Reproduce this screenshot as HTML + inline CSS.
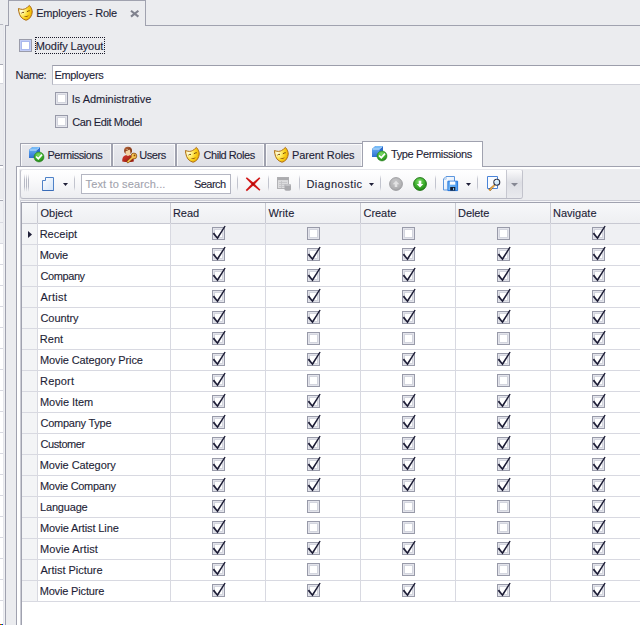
<!DOCTYPE html><html><head><meta charset="utf-8"><title>Employers - Role</title><style>

html,body{margin:0;padding:0;overflow:hidden}
html{width:640px;height:625px}
body{width:640px;height:625px;overflow:hidden;position:relative;background:#ebecef;font-family:"Liberation Sans",sans-serif;font-size:11px;color:#1f1f38;}
div,span{position:absolute;box-sizing:border-box;white-space:nowrap}
svg{position:absolute;overflow:visible}
.t{line-height:13px;height:13px;-webkit-text-stroke:0.12px currentColor}
.cb{width:13px;height:13px;border:1px solid #989aa9;background:#fff;box-shadow:inset 0 0 0 1px #e3e4eb,inset 0 0 0 2px #d3d5de}
.cbh{width:13px;height:13px;border:1px solid #9a9caa;background:#fff;box-shadow:inset 0 0 0 1px #c3cdf5,inset 0 0 0 2px #aab8ee}
.tab{height:23px;top:143px;border:1px solid #a0a2af;border-bottom:none;background:linear-gradient(#e9eaee,#dfe0e6);box-shadow:inset 1px 1px 0 rgba(255,255,255,.75),inset -1px 0 0 rgba(255,255,255,.75)}
.hl{height:1px;background:#d8d9e1}
.vl{width:1px;background:#d8d9e1}

</style></head><body><div style="left:0;top:0;width:640px;height:625px;overflow:hidden">
<svg width="0" height="0" style="left:-10px;top:-10px"><defs>
<radialGradient id="gm" cx="0.22" cy="0.38" r="0.85"><stop offset="0" stop-color="#fffde6"/><stop offset="0.3" stop-color="#ffef7a"/><stop offset="0.6" stop-color="#fbd420"/><stop offset="0.85" stop-color="#f0b808"/><stop offset="1" stop-color="#d69a06"/></radialGradient>
<linearGradient id="gcf" x1="0" y1="0" x2="0" y2="1"><stop offset="0" stop-color="#5ea6ee"/><stop offset="1" stop-color="#2f70d2"/></linearGradient>
<radialGradient id="ggr" cx="0.45" cy="0.3" r="0.75"><stop offset="0" stop-color="#7fdc6a"/><stop offset="0.55" stop-color="#3cae2c"/><stop offset="1" stop-color="#1f7d14"/></radialGradient>
<radialGradient id="ggy" cx="0.45" cy="0.3" r="0.75"><stop offset="0" stop-color="#c6c6c8"/><stop offset="0.7" stop-color="#b2b2b4"/><stop offset="1" stop-color="#9c9c9f"/></radialGradient>
<linearGradient id="gbody" x1="0" y1="0" x2="1" y2="1"><stop offset="0" stop-color="#d43c2e"/><stop offset="1" stop-color="#90140c"/></linearGradient>
<linearGradient id="ghair" x1="0" y1="0" x2="1" y2="1"><stop offset="0" stop-color="#b8683c"/><stop offset="1" stop-color="#6e2a10"/></linearGradient>
<linearGradient id="gpg" x1="0" y1="0" x2="1" y2="1"><stop offset="0" stop-color="#ffffff"/><stop offset="1" stop-color="#d4e4f8"/></linearGradient>
<linearGradient id="gfl" x1="1" y1="0" x2="0" y2="1"><stop offset="0" stop-color="#3f90ec"/><stop offset="1" stop-color="#7cc0f8"/></linearGradient>
<linearGradient id="gsep" x1="0" y1="0" x2="0" y2="1"><stop offset="0" stop-color="#b4b6c2" stop-opacity="0"/><stop offset="0.3" stop-color="#b4b6c2"/><stop offset="0.7" stop-color="#b4b6c2"/><stop offset="1" stop-color="#b4b6c2" stop-opacity="0"/></linearGradient>
</defs></svg>
<div style="left:0px;top:0px;width:5px;height:625px;background:#ebecef;"></div>
<div style="left:0px;top:24px;width:3px;height:1px;background:#b4b6c0;"></div>
<div style="left:0px;top:64px;width:3px;height:20px;background:#fff;border-top:1px solid #a8aab5;border-bottom:1px solid #d4d5dc"></div>
<div style="left:0px;top:165px;width:3px;height:1px;background:#a0a2af;"></div>
<div style="left:0px;top:166px;width:3px;height:2px;background:#fff;"></div>
<div style="left:0px;top:199px;width:3px;height:1px;background:#f8f8fa;"></div>
<div style="left:0px;top:200px;width:3px;height:1px;background:#a8aab5;"></div>
<div style="left:0px;top:201px;width:3px;height:42px;background:#f0f1f4;"></div>
<div style="left:0px;top:243px;width:3px;height:382px;background:#fff;"></div>
<div style="left:0px;top:222px;width:3px;height:1px;background:#d8d9e1;"></div>
<div style="left:0px;top:243px;width:3px;height:1px;background:#d8d9e1;"></div>
<div style="left:0px;top:264px;width:3px;height:1px;background:#d8d9e1;"></div>
<div style="left:0px;top:285px;width:3px;height:1px;background:#d8d9e1;"></div>
<div style="left:0px;top:306px;width:3px;height:1px;background:#d8d9e1;"></div>
<div style="left:0px;top:327px;width:3px;height:1px;background:#d8d9e1;"></div>
<div style="left:0px;top:348px;width:3px;height:1px;background:#d8d9e1;"></div>
<div style="left:0px;top:369px;width:3px;height:1px;background:#d8d9e1;"></div>
<div style="left:0px;top:390px;width:3px;height:1px;background:#d8d9e1;"></div>
<div style="left:0px;top:411px;width:3px;height:1px;background:#d8d9e1;"></div>
<div style="left:0px;top:432px;width:3px;height:1px;background:#d8d9e1;"></div>
<div style="left:0px;top:453px;width:3px;height:1px;background:#d8d9e1;"></div>
<div style="left:0px;top:474px;width:3px;height:1px;background:#d8d9e1;"></div>
<div style="left:0px;top:495px;width:3px;height:1px;background:#d8d9e1;"></div>
<div style="left:0px;top:516px;width:3px;height:1px;background:#d8d9e1;"></div>
<div style="left:0px;top:537px;width:3px;height:1px;background:#d8d9e1;"></div>
<div style="left:0px;top:558px;width:3px;height:1px;background:#d8d9e1;"></div>
<div style="left:0px;top:579px;width:3px;height:1px;background:#d8d9e1;"></div>
<div style="left:0px;top:600px;width:3px;height:1px;background:#d8d9e1;"></div>
<div style="left:3px;top:0px;width:1px;height:625px;background:#e6e7ec;"></div>
<div style="left:4px;top:0px;width:1px;height:625px;background:#eff0f3;"></div>
<div style="left:0px;top:0px;width:5px;height:24px;background:#ebecef;"></div>
<div style="left:0px;top:624px;width:1px;height:1px;background:#f00;"></div>
<div style="left:1px;top:624px;width:1px;height:1px;background:#0c0;"></div>
<div style="left:2px;top:624px;width:1px;height:1px;background:#00f;"></div>
<div style="left:5px;top:25px;width:1px;height:600px;background:#a0a2af;"></div>
<div style="left:5px;top:25px;width:635px;height:1px;background:#a0a2af;"></div>
<div style="left:8px;top:0;width:138px;height:26px;border:1px solid #a0a2af;border-bottom:none;background:#ebecef"></div>
<span class="t" style="left:36.25px;top:7px;letter-spacing:-0.233px;">Employers - Role</span>
<svg style="left:130px;top:10px" width="9" height="8" viewBox="0 0 9 8"><path d="M1 0.7 L8.4 6.6 M8.4 0.7 L1 6.6" stroke="#80828e" stroke-width="2.1" fill="none"/></svg>
<svg style="left:17px;top:4px" width="17" height="17" viewBox="0 0 17 17"><g transform="translate(0.4,0.55) scale(0.95)"><path d="M1.1 4.2 Q2.8 4.9 5.3 5.1 Q7.4 4.9 8.6 4.2 Q11 2.7 12.6 0.9 Q14.4 2.8 15 4.6 Q15.7 6.4 15.6 7.9 Q15.5 10.4 13.9 13.1 Q11.8 16.2 9.06 16.5 Q6 15.6 3.9 13.3 Q2 10.8 1.4 7 Q1.1 5.6 1.1 4.2 Z" fill="url(#gm)" stroke="#ae6c14" stroke-width="1.05" stroke-linejoin="round"/><path d="M4.3 9.0 Q5.5 7.9 6.9 8.3" stroke="#70400c" stroke-width="1.05" fill="none"/><path d="M10 7.6 Q11.4 6.5 13 6.5" stroke="#70400c" stroke-width="1.05" fill="none"/><path d="M6.5 12.1 Q9.4 12.6 12.1 11.2 Q10.2 14.4 6.5 12.1 Z" fill="#8a4e0c"/></g></svg>
<div class="cbh" style="left:19px;top:39px"></div>
<div style="left:35px;top:37px;width:70px;height:17px;border:1px dotted #1a1a2a"></div>
<span class="t" style="left:35.75px;top:40px;letter-spacing:-0.083px;">Modify Layout</span>
<span class="t" style="left:15.50px;top:69px;letter-spacing:-0.312px;">Name:</span>
<div style="left:52px;top:65px;width:600px;height:20px;border:1px solid #b4b6c2;border-top-color:#9c9eab;border-bottom-color:#cfd0d8;background:#fff"></div>
<span class="t" style="left:54.50px;top:69px;letter-spacing:-0.344px;">Employers</span>
<div class="cb" style="left:55px;top:92px"></div>
<span class="t" style="left:71.75px;top:93px;letter-spacing:-0.031px;">Is Administrative</span>
<div class="cb" style="left:55px;top:115px"></div>
<span class="t" style="left:72.25px;top:116px;letter-spacing:-0.404px;">Can Edit Model</span>
<div class="tab" style="left:20px;width:92px"></div>
<svg style="left:28px;top:146px" width="17" height="17" viewBox="0 0 17 17"><path d="M1 4 L4.5 1 L12 1 L12 9 L8.5 12 L1 12 Z" fill="#2c6ccc"/><path d="M1 4 L8.5 4 L8.5 12 L1 12 Z" fill="url(#gcf)"/><path d="M1 4 L4.5 1 L12 1 L8.5 4 Z" fill="#76baf6"/><path d="M1.6 4.1 L8.4 4.1 L11.4 1.5" stroke="#d4ecff" stroke-width="0.8" fill="none"/><circle cx="11" cy="11" r="5" fill="url(#ggr)" stroke="#1f7a16" stroke-width="0.5"/><path d="M8 10.5 L10.3 12.7 L14 8.6" stroke="#fff" stroke-width="1.7" fill="none"/></svg>
<span class="t" style="left:47.40px;top:149px;letter-spacing:-0.465px;">Permissions</span>
<div class="tab" style="left:112px;width:64px"></div>
<svg style="left:121px;top:146px" width="17" height="17" viewBox="0 0 17 17"><path d="M1.2 15.5 Q1 10 4.5 9.3 L6 9 Q7 10.6 8 9 L9.6 9.3 Q13 10 12.8 15.5 Q7 16.6 1.2 15.5 Z" fill="url(#gbody)"/><ellipse cx="7" cy="4.6" rx="4" ry="3.8" fill="url(#ghair)"/><ellipse cx="7" cy="6.4" rx="2.4" ry="3.3" fill="#f3d3a2"/><path d="M3.6 5 Q6.4 4.6 9.2 2.6 Q10.6 4 10.6 6" stroke="#8a3c18" stroke-width="0.9" fill="none"/><path d="M11.4 11.6 L7 15.8" stroke="#8a4a10" stroke-width="2.8" stroke-linecap="round"/><circle cx="12.9" cy="10" r="2.9" fill="#f6c452" stroke="#8a4a10" stroke-width="0.8"/><path d="M11.4 11.6 L7 15.8" stroke="#f6c452" stroke-width="1.5" stroke-linecap="round"/><circle cx="13.5" cy="9.4" r="0.9" fill="#8a4a10"/></svg>
<span class="t" style="left:139.25px;top:149px;letter-spacing:-0.438px;">Users</span>
<div class="tab" style="left:176px;width:89px"></div>
<svg style="left:184px;top:146px" width="17" height="17" viewBox="0 0 17 17"><g transform="translate(0.4,0.55) scale(0.95)"><path d="M1.1 4.2 Q2.8 4.9 5.3 5.1 Q7.4 4.9 8.6 4.2 Q11 2.7 12.6 0.9 Q14.4 2.8 15 4.6 Q15.7 6.4 15.6 7.9 Q15.5 10.4 13.9 13.1 Q11.8 16.2 9.06 16.5 Q6 15.6 3.9 13.3 Q2 10.8 1.4 7 Q1.1 5.6 1.1 4.2 Z" fill="url(#gm)" stroke="#ae6c14" stroke-width="1.05" stroke-linejoin="round"/><path d="M4.3 9.0 Q5.5 7.9 6.9 8.3" stroke="#70400c" stroke-width="1.05" fill="none"/><path d="M10 7.6 Q11.4 6.5 13 6.5" stroke="#70400c" stroke-width="1.05" fill="none"/><path d="M6.5 12.1 Q9.4 12.6 12.1 11.2 Q10.2 14.4 6.5 12.1 Z" fill="#8a4e0c"/></g></svg>
<span class="t" style="left:203.50px;top:149px;letter-spacing:-0.460px;">Child Roles</span>
<div class="tab" style="left:265px;width:98px"></div>
<svg style="left:273.3px;top:146px" width="17" height="17" viewBox="0 0 17 17"><g transform="translate(0.4,0.55) scale(0.95)"><path d="M1.1 4.2 Q2.8 4.9 5.3 5.1 Q7.4 4.9 8.6 4.2 Q11 2.7 12.6 0.9 Q14.4 2.8 15 4.6 Q15.7 6.4 15.6 7.9 Q15.5 10.4 13.9 13.1 Q11.8 16.2 9.06 16.5 Q6 15.6 3.9 13.3 Q2 10.8 1.4 7 Q1.1 5.6 1.1 4.2 Z" fill="url(#gm)" stroke="#ae6c14" stroke-width="1.05" stroke-linejoin="round"/><path d="M4.3 9.0 Q5.5 7.9 6.9 8.3" stroke="#70400c" stroke-width="1.05" fill="none"/><path d="M10 7.6 Q11.4 6.5 13 6.5" stroke="#70400c" stroke-width="1.05" fill="none"/><path d="M6.5 12.1 Q9.4 12.6 12.1 11.2 Q10.2 14.4 6.5 12.1 Z" fill="#8a4e0c"/></g></svg>
<span class="t" style="left:291.90px;top:149px;letter-spacing:-0.082px;">Parent Roles</span>
<div style="left:16px;top:166px;width:640px;height:470px;border:1px solid #a0a2af;background:#fff"></div>
<div style="left:19px;top:169px;width:640px;height:31px;background:#ebecef;"></div>
<div style="left:362px;top:141px;width:121px;height:26px;border:1px solid #a0a2af;border-bottom:none;background:#fff"></div>
<svg style="left:371px;top:145px" width="17" height="17" viewBox="0 0 17 17"><path d="M1 4 L4.5 1 L12 1 L12 9 L8.5 12 L1 12 Z" fill="#2c6ccc"/><path d="M1 4 L8.5 4 L8.5 12 L1 12 Z" fill="url(#gcf)"/><path d="M1 4 L4.5 1 L12 1 L8.5 4 Z" fill="#76baf6"/><path d="M1.6 4.1 L8.4 4.1 L11.4 1.5" stroke="#d4ecff" stroke-width="0.8" fill="none"/><circle cx="11" cy="11" r="5" fill="url(#ggr)" stroke="#1f7a16" stroke-width="0.5"/><path d="M8 10.5 L10.3 12.7 L14 8.6" stroke="#fff" stroke-width="1.7" fill="none"/></svg>
<span class="t" style="left:391.00px;top:148px;letter-spacing:-0.373px;">Type Permissions</span>
<div style="left:20px;top:169px;width:503px;height:30px;border:1px solid #c2c3cc;border-top-color:#e4e5ea;border-bottom-color:#b9bac5;border-radius:3px;background:linear-gradient(#ffffff,#f8f8fa 45%,#ecedf0)"></div>
<div style="left:506px;top:170px;width:16px;height:28px;border-left:1px solid #c6c7d0;border-radius:0 3px 3px 0;background:linear-gradient(#fbfbfc,#dddee4 45%,#e9eaee)"></div>
<div style="left:24px;top:174px;width:1px;height:18px;background:linear-gradient(rgba(170,172,184,0),#b6b8c4 30%,#b6b8c4 70%,rgba(170,172,184,0))"></div>
<div style="left:26px;top:174px;width:1px;height:18px;background:linear-gradient(rgba(170,172,184,0),#b6b8c4 30%,#b6b8c4 70%,rgba(170,172,184,0))"></div>
<div style="left:28px;top:174px;width:1px;height:18px;background:linear-gradient(rgba(170,172,184,0),#b6b8c4 30%,#b6b8c4 70%,rgba(170,172,184,0))"></div>
<svg style="left:42px;top:177px" width="12" height="14" viewBox="0 0 12 14"><path d="M3.5 0.5 L11.5 0.5 L11.5 13.5 L0.5 13.5 L0.5 3.5 L3.5 3.5 Z" fill="url(#gpg)" stroke="#4f82c8" stroke-width="1"/><path d="M0.5 13.5 H11.5" stroke="#3a6cb8" stroke-width="1"/></svg>
<svg style="left:63px;top:183px" width="5" height="3" viewBox="0 0 5 3"><path d="M0 0 L5 0 L2.5 3 Z" fill="#1f1f38"/></svg>
<div style="left:74px;top:175px;width:1px;height:16px;background:linear-gradient(rgba(190,192,204,0),#c2c4ce 25%,#c2c4ce 75%,rgba(190,192,204,0))"></div>
<div style="left:81px;top:174px;width:150px;height:20px;border:1px solid #b4b6c2;background:#fff"></div>
<span class="t" style="left:85.50px;top:178px;letter-spacing:0.141px;color:#a2a4ae;">Text to search...</span>
<span class="t" style="left:194.00px;top:178px;letter-spacing:-0.540px;">Search</span>
<div style="left:237px;top:175px;width:1px;height:16px;background:linear-gradient(rgba(190,192,204,0),#c2c4ce 25%,#c2c4ce 75%,rgba(190,192,204,0))"></div>
<svg style="left:246px;top:177px" width="15" height="14" viewBox="0 0 15 14"><path d="M-0.21 1.25 L6.25 7.92 L13.39 13.85 L14.41 12.75 L7.95 6.08 L0.81 0.15 Z" fill="#d01515"/><path d="M13.28 0.16 L6.19 6.25 L-0.22 13.06 L0.82 14.14 L7.91 8.05 L14.32 1.24 Z" fill="#d01515"/><circle cx="7.05" cy="7.05" r="1.3" fill="#b00a0a"/></svg>
<div style="left:268px;top:175px;width:1px;height:16px;background:linear-gradient(rgba(190,192,204,0),#c2c4ce 25%,#c2c4ce 75%,rgba(190,192,204,0))"></div>
<svg style="left:277px;top:177px" width="15" height="14" viewBox="0 0 15 14"><rect x="0.5" y="0.5" width="11" height="11" fill="#dcdcde" stroke="#b2b2b5"/><rect x="0.5" y="0.5" width="11" height="2.6" fill="#acacaf"/><path d="M2 5.5 H10 M2 7.5 H10 M2 9.5 H10 M4.5 4 V11" stroke="#c2c2c5" stroke-width="0.8"/><path d="M7.5 8 Q7.5 7 10.75 7 Q14 7 14 8 V12.5 Q14 13.8 10.75 13.8 Q7.5 13.8 7.5 12.5 Z" fill="#a9a9ad"/><ellipse cx="10.75" cy="8" rx="3" ry="0.9" fill="#c4c4c8"/></svg>
<div style="left:299px;top:175px;width:1px;height:16px;background:linear-gradient(rgba(190,192,204,0),#c2c4ce 25%,#c2c4ce 75%,rgba(190,192,204,0))"></div>
<span class="t" style="left:306.40px;top:178px;letter-spacing:0.483px;">Diagnostic</span>
<svg style="left:369px;top:183px" width="5" height="3" viewBox="0 0 5 3"><path d="M0 0 L5 0 L2.5 3 Z" fill="#1f1f38"/></svg>
<div style="left:380px;top:175px;width:1px;height:16px;background:linear-gradient(rgba(190,192,204,0),#c2c4ce 25%,#c2c4ce 75%,rgba(190,192,204,0))"></div>
<svg style="left:389px;top:177px" width="14" height="14" viewBox="0 0 14 14"><circle cx="7" cy="7" r="6.4" fill="url(#ggy)" stroke="#9b9b9e" stroke-width="0.9"/><path d="M7 3.8 L10.3 7.3 H8.3 V10 H5.7 V7.3 H3.7 Z" fill="#e2e2e3"/></svg>
<svg style="left:413px;top:177px" width="14" height="14" viewBox="0 0 14 14"><circle cx="7" cy="7" r="6.4" fill="url(#ggr)" stroke="#1b6f12" stroke-width="0.9"/><path d="M7 10.4 L10.3 7 H8.3 V3.8 H5.7 V7 H3.7 Z" fill="#fff"/></svg>
<div style="left:435px;top:175px;width:1px;height:16px;background:linear-gradient(rgba(190,192,204,0),#c2c4ce 25%,#c2c4ce 75%,rgba(190,192,204,0))"></div>
<svg style="left:443px;top:176px" width="16" height="16" viewBox="0 0 16 16"><path d="M3 0.5 H11.5 V14 H0.5 V3 Z" fill="url(#gpg)" stroke="#5c96de"/><path d="M0.8 3.2 H3.2 V0.8" fill="none" stroke="#8ab6ea" stroke-width="0.7"/><path d="M4.9 5.2 H14.6 V14.6 H4.9 Z" fill="url(#gfl)" stroke="#2878dc" stroke-width="1"/><rect x="6.9" y="5.5" width="5.4" height="3.2" fill="#fdfeff"/><rect x="7.2" y="11" width="5.1" height="3.6" fill="#141c2c"/><rect x="10" y="11.9" width="1.1" height="2.2" fill="#7cc0f4"/></svg>
<svg style="left:466px;top:183px" width="5" height="3" viewBox="0 0 5 3"><path d="M0 0 L5 0 L2.5 3 Z" fill="#1f1f38"/></svg>
<div style="left:477px;top:175px;width:1px;height:16px;background:linear-gradient(rgba(190,192,204,0),#c2c4ce 25%,#c2c4ce 75%,rgba(190,192,204,0))"></div>
<svg style="left:487px;top:176px" width="16" height="16" viewBox="0 0 16 16"><path d="M0.5 0.5 H10.5 V12.5 H0.5 Z" fill="#fafcff" stroke="#4a84d8"/><path d="M7 8.5 L8.1 9.5 L3.3 15.1 L1.3 13.5 Z" fill="#7e4e14"/><path d="M7.3 9.3 L2.6 14.1" stroke="#f6b44c" stroke-width="1.25" stroke-linecap="round"/><circle cx="9.8" cy="6.3" r="3.0" fill="#d4ecfc" stroke="#2e3246" stroke-width="1.05"/><path d="M7.9 5.8 Q8.5 4.2 10.2 4.1" stroke="#fff" stroke-width="0.9" fill="none"/></svg>
<svg style="left:511px;top:183px" width="7" height="4" viewBox="0 0 7 4"><path d="M0 0 L7 0 L3.5 3.6 Z" fill="#858793"/></svg>
<div style="left:20px;top:200px;width:640px;height:430px;background:#fff;border:1px solid #cbccd5"></div>
<div style="left:21px;top:201px;width:640px;height:430px;background:#f6f6f9;"></div>
<div style="left:21px;top:202px;width:640px;height:430px;background:#fff;border:1px solid #a0a2af"></div>
<div style="left:22px;top:203px;width:640px;height:20px;background:linear-gradient(#f7f8fa,#eeeff2);"></div>
<div style="left:22px;top:224px;width:15px;height:377px;background:#f3f4f6;"></div>
<div style="left:171px;top:224px;width:480px;height:20px;background:#eff0f3;"></div>
<div class="hl" style="left:22px;top:223px;width:640px;background:#c8c9d2"></div>
<div class="hl" style="left:22px;top:244px;width:640px"></div>
<div class="hl" style="left:22px;top:265px;width:640px"></div>
<div class="hl" style="left:22px;top:286px;width:640px"></div>
<div class="hl" style="left:22px;top:307px;width:640px"></div>
<div class="hl" style="left:22px;top:328px;width:640px"></div>
<div class="hl" style="left:22px;top:349px;width:640px"></div>
<div class="hl" style="left:22px;top:370px;width:640px"></div>
<div class="hl" style="left:22px;top:391px;width:640px"></div>
<div class="hl" style="left:22px;top:412px;width:640px"></div>
<div class="hl" style="left:22px;top:433px;width:640px"></div>
<div class="hl" style="left:22px;top:454px;width:640px"></div>
<div class="hl" style="left:22px;top:475px;width:640px"></div>
<div class="hl" style="left:22px;top:496px;width:640px"></div>
<div class="hl" style="left:22px;top:517px;width:640px"></div>
<div class="hl" style="left:22px;top:538px;width:640px"></div>
<div class="hl" style="left:22px;top:559px;width:640px"></div>
<div class="hl" style="left:22px;top:580px;width:640px"></div>
<div class="hl" style="left:22px;top:601px;width:640px"></div>
<div class="vl" style="left:37px;top:203px;height:399px"></div>
<div class="vl" style="left:170px;top:203px;height:399px"></div>
<div class="vl" style="left:265px;top:203px;height:399px"></div>
<div class="vl" style="left:360px;top:203px;height:399px"></div>
<div class="vl" style="left:455px;top:203px;height:399px"></div>
<div class="vl" style="left:550px;top:203px;height:399px"></div>
<div style="left:37px;top:203px;width:1px;height:20px;background:#c8c9d2;"></div>
<div style="left:170px;top:203px;width:1px;height:20px;background:#c8c9d2;"></div>
<div style="left:265px;top:203px;width:1px;height:20px;background:#c8c9d2;"></div>
<div style="left:360px;top:203px;width:1px;height:20px;background:#c8c9d2;"></div>
<div style="left:455px;top:203px;width:1px;height:20px;background:#c8c9d2;"></div>
<div style="left:550px;top:203px;width:1px;height:20px;background:#c8c9d2;"></div>
<span class="t" style="left:40.50px;top:207px;letter-spacing:0.000px;">Object</span>
<span class="t" style="left:173.00px;top:207px;letter-spacing:-0.083px;">Read</span>
<span class="t" style="left:268.60px;top:207px;letter-spacing:0.075px;">Write</span>
<span class="t" style="left:363.60px;top:207px;letter-spacing:-0.070px;">Create</span>
<span class="t" style="left:458.10px;top:207px;letter-spacing:-0.120px;">Delete</span>
<span class="t" style="left:553.00px;top:207px;letter-spacing:0.014px;">Navigate</span>
<svg style="left:28px;top:231px" width="4" height="7" viewBox="0 0 4 7"><path d="M0 0 L4 3.5 L0 7 Z" fill="#1f1f38"/></svg>
<span class="t" style="left:39.65px;top:228px;letter-spacing:0.025px;">Receipt</span>
<div class="cb" style="left:212px;top:227px"></div><svg style="left:212px;top:225px" width="14" height="14" viewBox="0 -2 14 14"><path d="M0.7 6.7 L2.1 5.6 L5.3 9.7 L12.5 -1.3 L13.7 -0.7 L5.6 12.5 Z" fill="#1d1d36"/></svg>
<div class="cb" style="left:307px;top:227px"></div>
<div class="cb" style="left:402px;top:227px"></div>
<div class="cb" style="left:497px;top:227px"></div>
<div class="cb" style="left:592px;top:227px"></div><svg style="left:592px;top:225px" width="14" height="14" viewBox="0 -2 14 14"><path d="M0.7 6.7 L2.1 5.6 L5.3 9.7 L12.5 -1.3 L13.7 -0.7 L5.6 12.5 Z" fill="#1d1d36"/></svg>
<span class="t" style="left:39.65px;top:249px;letter-spacing:-0.212px;">Movie</span>
<div class="cb" style="left:212px;top:248px"></div><svg style="left:212px;top:246px" width="14" height="14" viewBox="0 -2 14 14"><path d="M0.7 6.7 L2.1 5.6 L5.3 9.7 L12.5 -1.3 L13.7 -0.7 L5.6 12.5 Z" fill="#1d1d36"/></svg>
<div class="cb" style="left:307px;top:248px"></div><svg style="left:307px;top:246px" width="14" height="14" viewBox="0 -2 14 14"><path d="M0.7 6.7 L2.1 5.6 L5.3 9.7 L12.5 -1.3 L13.7 -0.7 L5.6 12.5 Z" fill="#1d1d36"/></svg>
<div class="cb" style="left:402px;top:248px"></div><svg style="left:402px;top:246px" width="14" height="14" viewBox="0 -2 14 14"><path d="M0.7 6.7 L2.1 5.6 L5.3 9.7 L12.5 -1.3 L13.7 -0.7 L5.6 12.5 Z" fill="#1d1d36"/></svg>
<div class="cb" style="left:497px;top:248px"></div><svg style="left:497px;top:246px" width="14" height="14" viewBox="0 -2 14 14"><path d="M0.7 6.7 L2.1 5.6 L5.3 9.7 L12.5 -1.3 L13.7 -0.7 L5.6 12.5 Z" fill="#1d1d36"/></svg>
<div class="cb" style="left:592px;top:248px"></div><svg style="left:592px;top:246px" width="14" height="14" viewBox="0 -2 14 14"><path d="M0.7 6.7 L2.1 5.6 L5.3 9.7 L12.5 -1.3 L13.7 -0.7 L5.6 12.5 Z" fill="#1d1d36"/></svg>
<span class="t" style="left:40.50px;top:270px;letter-spacing:-0.417px;">Company</span>
<div class="cb" style="left:212px;top:269px"></div><svg style="left:212px;top:267px" width="14" height="14" viewBox="0 -2 14 14"><path d="M0.7 6.7 L2.1 5.6 L5.3 9.7 L12.5 -1.3 L13.7 -0.7 L5.6 12.5 Z" fill="#1d1d36"/></svg>
<div class="cb" style="left:307px;top:269px"></div><svg style="left:307px;top:267px" width="14" height="14" viewBox="0 -2 14 14"><path d="M0.7 6.7 L2.1 5.6 L5.3 9.7 L12.5 -1.3 L13.7 -0.7 L5.6 12.5 Z" fill="#1d1d36"/></svg>
<div class="cb" style="left:402px;top:269px"></div><svg style="left:402px;top:267px" width="14" height="14" viewBox="0 -2 14 14"><path d="M0.7 6.7 L2.1 5.6 L5.3 9.7 L12.5 -1.3 L13.7 -0.7 L5.6 12.5 Z" fill="#1d1d36"/></svg>
<div class="cb" style="left:497px;top:269px"></div><svg style="left:497px;top:267px" width="14" height="14" viewBox="0 -2 14 14"><path d="M0.7 6.7 L2.1 5.6 L5.3 9.7 L12.5 -1.3 L13.7 -0.7 L5.6 12.5 Z" fill="#1d1d36"/></svg>
<div class="cb" style="left:592px;top:269px"></div><svg style="left:592px;top:267px" width="14" height="14" viewBox="0 -2 14 14"><path d="M0.7 6.7 L2.1 5.6 L5.3 9.7 L12.5 -1.3 L13.7 -0.7 L5.6 12.5 Z" fill="#1d1d36"/></svg>
<span class="t" style="left:40.50px;top:291px;letter-spacing:0.250px;">Artist</span>
<div class="cb" style="left:212px;top:290px"></div><svg style="left:212px;top:288px" width="14" height="14" viewBox="0 -2 14 14"><path d="M0.7 6.7 L2.1 5.6 L5.3 9.7 L12.5 -1.3 L13.7 -0.7 L5.6 12.5 Z" fill="#1d1d36"/></svg>
<div class="cb" style="left:307px;top:290px"></div><svg style="left:307px;top:288px" width="14" height="14" viewBox="0 -2 14 14"><path d="M0.7 6.7 L2.1 5.6 L5.3 9.7 L12.5 -1.3 L13.7 -0.7 L5.6 12.5 Z" fill="#1d1d36"/></svg>
<div class="cb" style="left:402px;top:290px"></div><svg style="left:402px;top:288px" width="14" height="14" viewBox="0 -2 14 14"><path d="M0.7 6.7 L2.1 5.6 L5.3 9.7 L12.5 -1.3 L13.7 -0.7 L5.6 12.5 Z" fill="#1d1d36"/></svg>
<div class="cb" style="left:497px;top:290px"></div><svg style="left:497px;top:288px" width="14" height="14" viewBox="0 -2 14 14"><path d="M0.7 6.7 L2.1 5.6 L5.3 9.7 L12.5 -1.3 L13.7 -0.7 L5.6 12.5 Z" fill="#1d1d36"/></svg>
<div class="cb" style="left:592px;top:290px"></div><svg style="left:592px;top:288px" width="14" height="14" viewBox="0 -2 14 14"><path d="M0.7 6.7 L2.1 5.6 L5.3 9.7 L12.5 -1.3 L13.7 -0.7 L5.6 12.5 Z" fill="#1d1d36"/></svg>
<span class="t" style="left:40.50px;top:312px;letter-spacing:-0.083px;">Country</span>
<div class="cb" style="left:212px;top:311px"></div><svg style="left:212px;top:309px" width="14" height="14" viewBox="0 -2 14 14"><path d="M0.7 6.7 L2.1 5.6 L5.3 9.7 L12.5 -1.3 L13.7 -0.7 L5.6 12.5 Z" fill="#1d1d36"/></svg>
<div class="cb" style="left:307px;top:311px"></div><svg style="left:307px;top:309px" width="14" height="14" viewBox="0 -2 14 14"><path d="M0.7 6.7 L2.1 5.6 L5.3 9.7 L12.5 -1.3 L13.7 -0.7 L5.6 12.5 Z" fill="#1d1d36"/></svg>
<div class="cb" style="left:402px;top:311px"></div><svg style="left:402px;top:309px" width="14" height="14" viewBox="0 -2 14 14"><path d="M0.7 6.7 L2.1 5.6 L5.3 9.7 L12.5 -1.3 L13.7 -0.7 L5.6 12.5 Z" fill="#1d1d36"/></svg>
<div class="cb" style="left:497px;top:311px"></div><svg style="left:497px;top:309px" width="14" height="14" viewBox="0 -2 14 14"><path d="M0.7 6.7 L2.1 5.6 L5.3 9.7 L12.5 -1.3 L13.7 -0.7 L5.6 12.5 Z" fill="#1d1d36"/></svg>
<div class="cb" style="left:592px;top:311px"></div><svg style="left:592px;top:309px" width="14" height="14" viewBox="0 -2 14 14"><path d="M0.7 6.7 L2.1 5.6 L5.3 9.7 L12.5 -1.3 L13.7 -0.7 L5.6 12.5 Z" fill="#1d1d36"/></svg>
<span class="t" style="left:39.65px;top:333px;letter-spacing:0.100px;">Rent</span>
<div class="cb" style="left:212px;top:332px"></div><svg style="left:212px;top:330px" width="14" height="14" viewBox="0 -2 14 14"><path d="M0.7 6.7 L2.1 5.6 L5.3 9.7 L12.5 -1.3 L13.7 -0.7 L5.6 12.5 Z" fill="#1d1d36"/></svg>
<div class="cb" style="left:307px;top:332px"></div>
<div class="cb" style="left:402px;top:332px"></div>
<div class="cb" style="left:497px;top:332px"></div>
<div class="cb" style="left:592px;top:332px"></div><svg style="left:592px;top:330px" width="14" height="14" viewBox="0 -2 14 14"><path d="M0.7 6.7 L2.1 5.6 L5.3 9.7 L12.5 -1.3 L13.7 -0.7 L5.6 12.5 Z" fill="#1d1d36"/></svg>
<span class="t" style="left:40.00px;top:354px;letter-spacing:-0.118px;">Movie Category Price</span>
<div class="cb" style="left:212px;top:353px"></div><svg style="left:212px;top:351px" width="14" height="14" viewBox="0 -2 14 14"><path d="M0.7 6.7 L2.1 5.6 L5.3 9.7 L12.5 -1.3 L13.7 -0.7 L5.6 12.5 Z" fill="#1d1d36"/></svg>
<div class="cb" style="left:307px;top:353px"></div><svg style="left:307px;top:351px" width="14" height="14" viewBox="0 -2 14 14"><path d="M0.7 6.7 L2.1 5.6 L5.3 9.7 L12.5 -1.3 L13.7 -0.7 L5.6 12.5 Z" fill="#1d1d36"/></svg>
<div class="cb" style="left:402px;top:353px"></div><svg style="left:402px;top:351px" width="14" height="14" viewBox="0 -2 14 14"><path d="M0.7 6.7 L2.1 5.6 L5.3 9.7 L12.5 -1.3 L13.7 -0.7 L5.6 12.5 Z" fill="#1d1d36"/></svg>
<div class="cb" style="left:497px;top:353px"></div><svg style="left:497px;top:351px" width="14" height="14" viewBox="0 -2 14 14"><path d="M0.7 6.7 L2.1 5.6 L5.3 9.7 L12.5 -1.3 L13.7 -0.7 L5.6 12.5 Z" fill="#1d1d36"/></svg>
<div class="cb" style="left:592px;top:353px"></div><svg style="left:592px;top:351px" width="14" height="14" viewBox="0 -2 14 14"><path d="M0.7 6.7 L2.1 5.6 L5.3 9.7 L12.5 -1.3 L13.7 -0.7 L5.6 12.5 Z" fill="#1d1d36"/></svg>
<span class="t" style="left:40.00px;top:375px;letter-spacing:0.200px;">Report</span>
<div class="cb" style="left:212px;top:374px"></div><svg style="left:212px;top:372px" width="14" height="14" viewBox="0 -2 14 14"><path d="M0.7 6.7 L2.1 5.6 L5.3 9.7 L12.5 -1.3 L13.7 -0.7 L5.6 12.5 Z" fill="#1d1d36"/></svg>
<div class="cb" style="left:307px;top:374px"></div>
<div class="cb" style="left:402px;top:374px"></div>
<div class="cb" style="left:497px;top:374px"></div>
<div class="cb" style="left:592px;top:374px"></div><svg style="left:592px;top:372px" width="14" height="14" viewBox="0 -2 14 14"><path d="M0.7 6.7 L2.1 5.6 L5.3 9.7 L12.5 -1.3 L13.7 -0.7 L5.6 12.5 Z" fill="#1d1d36"/></svg>
<span class="t" style="left:40.00px;top:396px;letter-spacing:-0.056px;">Movie Item</span>
<div class="cb" style="left:212px;top:395px"></div><svg style="left:212px;top:393px" width="14" height="14" viewBox="0 -2 14 14"><path d="M0.7 6.7 L2.1 5.6 L5.3 9.7 L12.5 -1.3 L13.7 -0.7 L5.6 12.5 Z" fill="#1d1d36"/></svg>
<div class="cb" style="left:307px;top:395px"></div><svg style="left:307px;top:393px" width="14" height="14" viewBox="0 -2 14 14"><path d="M0.7 6.7 L2.1 5.6 L5.3 9.7 L12.5 -1.3 L13.7 -0.7 L5.6 12.5 Z" fill="#1d1d36"/></svg>
<div class="cb" style="left:402px;top:395px"></div><svg style="left:402px;top:393px" width="14" height="14" viewBox="0 -2 14 14"><path d="M0.7 6.7 L2.1 5.6 L5.3 9.7 L12.5 -1.3 L13.7 -0.7 L5.6 12.5 Z" fill="#1d1d36"/></svg>
<div class="cb" style="left:497px;top:395px"></div><svg style="left:497px;top:393px" width="14" height="14" viewBox="0 -2 14 14"><path d="M0.7 6.7 L2.1 5.6 L5.3 9.7 L12.5 -1.3 L13.7 -0.7 L5.6 12.5 Z" fill="#1d1d36"/></svg>
<div class="cb" style="left:592px;top:395px"></div><svg style="left:592px;top:393px" width="14" height="14" viewBox="0 -2 14 14"><path d="M0.7 6.7 L2.1 5.6 L5.3 9.7 L12.5 -1.3 L13.7 -0.7 L5.6 12.5 Z" fill="#1d1d36"/></svg>
<span class="t" style="left:40.50px;top:417px;letter-spacing:-0.250px;">Company Type</span>
<div class="cb" style="left:212px;top:416px"></div><svg style="left:212px;top:414px" width="14" height="14" viewBox="0 -2 14 14"><path d="M0.7 6.7 L2.1 5.6 L5.3 9.7 L12.5 -1.3 L13.7 -0.7 L5.6 12.5 Z" fill="#1d1d36"/></svg>
<div class="cb" style="left:307px;top:416px"></div><svg style="left:307px;top:414px" width="14" height="14" viewBox="0 -2 14 14"><path d="M0.7 6.7 L2.1 5.6 L5.3 9.7 L12.5 -1.3 L13.7 -0.7 L5.6 12.5 Z" fill="#1d1d36"/></svg>
<div class="cb" style="left:402px;top:416px"></div><svg style="left:402px;top:414px" width="14" height="14" viewBox="0 -2 14 14"><path d="M0.7 6.7 L2.1 5.6 L5.3 9.7 L12.5 -1.3 L13.7 -0.7 L5.6 12.5 Z" fill="#1d1d36"/></svg>
<div class="cb" style="left:497px;top:416px"></div><svg style="left:497px;top:414px" width="14" height="14" viewBox="0 -2 14 14"><path d="M0.7 6.7 L2.1 5.6 L5.3 9.7 L12.5 -1.3 L13.7 -0.7 L5.6 12.5 Z" fill="#1d1d36"/></svg>
<div class="cb" style="left:592px;top:416px"></div><svg style="left:592px;top:414px" width="14" height="14" viewBox="0 -2 14 14"><path d="M0.7 6.7 L2.1 5.6 L5.3 9.7 L12.5 -1.3 L13.7 -0.7 L5.6 12.5 Z" fill="#1d1d36"/></svg>
<span class="t" style="left:40.50px;top:438px;letter-spacing:-0.429px;">Customer</span>
<div class="cb" style="left:212px;top:437px"></div><svg style="left:212px;top:435px" width="14" height="14" viewBox="0 -2 14 14"><path d="M0.7 6.7 L2.1 5.6 L5.3 9.7 L12.5 -1.3 L13.7 -0.7 L5.6 12.5 Z" fill="#1d1d36"/></svg>
<div class="cb" style="left:307px;top:437px"></div><svg style="left:307px;top:435px" width="14" height="14" viewBox="0 -2 14 14"><path d="M0.7 6.7 L2.1 5.6 L5.3 9.7 L12.5 -1.3 L13.7 -0.7 L5.6 12.5 Z" fill="#1d1d36"/></svg>
<div class="cb" style="left:402px;top:437px"></div><svg style="left:402px;top:435px" width="14" height="14" viewBox="0 -2 14 14"><path d="M0.7 6.7 L2.1 5.6 L5.3 9.7 L12.5 -1.3 L13.7 -0.7 L5.6 12.5 Z" fill="#1d1d36"/></svg>
<div class="cb" style="left:497px;top:437px"></div><svg style="left:497px;top:435px" width="14" height="14" viewBox="0 -2 14 14"><path d="M0.7 6.7 L2.1 5.6 L5.3 9.7 L12.5 -1.3 L13.7 -0.7 L5.6 12.5 Z" fill="#1d1d36"/></svg>
<div class="cb" style="left:592px;top:437px"></div><svg style="left:592px;top:435px" width="14" height="14" viewBox="0 -2 14 14"><path d="M0.7 6.7 L2.1 5.6 L5.3 9.7 L12.5 -1.3 L13.7 -0.7 L5.6 12.5 Z" fill="#1d1d36"/></svg>
<span class="t" style="left:39.65px;top:459px;letter-spacing:-0.065px;">Movie Category</span>
<div class="cb" style="left:212px;top:458px"></div><svg style="left:212px;top:456px" width="14" height="14" viewBox="0 -2 14 14"><path d="M0.7 6.7 L2.1 5.6 L5.3 9.7 L12.5 -1.3 L13.7 -0.7 L5.6 12.5 Z" fill="#1d1d36"/></svg>
<div class="cb" style="left:307px;top:458px"></div><svg style="left:307px;top:456px" width="14" height="14" viewBox="0 -2 14 14"><path d="M0.7 6.7 L2.1 5.6 L5.3 9.7 L12.5 -1.3 L13.7 -0.7 L5.6 12.5 Z" fill="#1d1d36"/></svg>
<div class="cb" style="left:402px;top:458px"></div><svg style="left:402px;top:456px" width="14" height="14" viewBox="0 -2 14 14"><path d="M0.7 6.7 L2.1 5.6 L5.3 9.7 L12.5 -1.3 L13.7 -0.7 L5.6 12.5 Z" fill="#1d1d36"/></svg>
<div class="cb" style="left:497px;top:458px"></div><svg style="left:497px;top:456px" width="14" height="14" viewBox="0 -2 14 14"><path d="M0.7 6.7 L2.1 5.6 L5.3 9.7 L12.5 -1.3 L13.7 -0.7 L5.6 12.5 Z" fill="#1d1d36"/></svg>
<div class="cb" style="left:592px;top:458px"></div><svg style="left:592px;top:456px" width="14" height="14" viewBox="0 -2 14 14"><path d="M0.7 6.7 L2.1 5.6 L5.3 9.7 L12.5 -1.3 L13.7 -0.7 L5.6 12.5 Z" fill="#1d1d36"/></svg>
<span class="t" style="left:40.00px;top:480px;letter-spacing:-0.292px;">Movie Company</span>
<div class="cb" style="left:212px;top:479px"></div><svg style="left:212px;top:477px" width="14" height="14" viewBox="0 -2 14 14"><path d="M0.7 6.7 L2.1 5.6 L5.3 9.7 L12.5 -1.3 L13.7 -0.7 L5.6 12.5 Z" fill="#1d1d36"/></svg>
<div class="cb" style="left:307px;top:479px"></div><svg style="left:307px;top:477px" width="14" height="14" viewBox="0 -2 14 14"><path d="M0.7 6.7 L2.1 5.6 L5.3 9.7 L12.5 -1.3 L13.7 -0.7 L5.6 12.5 Z" fill="#1d1d36"/></svg>
<div class="cb" style="left:402px;top:479px"></div><svg style="left:402px;top:477px" width="14" height="14" viewBox="0 -2 14 14"><path d="M0.7 6.7 L2.1 5.6 L5.3 9.7 L12.5 -1.3 L13.7 -0.7 L5.6 12.5 Z" fill="#1d1d36"/></svg>
<div class="cb" style="left:497px;top:479px"></div><svg style="left:497px;top:477px" width="14" height="14" viewBox="0 -2 14 14"><path d="M0.7 6.7 L2.1 5.6 L5.3 9.7 L12.5 -1.3 L13.7 -0.7 L5.6 12.5 Z" fill="#1d1d36"/></svg>
<div class="cb" style="left:592px;top:479px"></div><svg style="left:592px;top:477px" width="14" height="14" viewBox="0 -2 14 14"><path d="M0.7 6.7 L2.1 5.6 L5.3 9.7 L12.5 -1.3 L13.7 -0.7 L5.6 12.5 Z" fill="#1d1d36"/></svg>
<span class="t" style="left:40.00px;top:501px;letter-spacing:-0.179px;">Language</span>
<div class="cb" style="left:212px;top:500px"></div><svg style="left:212px;top:498px" width="14" height="14" viewBox="0 -2 14 14"><path d="M0.7 6.7 L2.1 5.6 L5.3 9.7 L12.5 -1.3 L13.7 -0.7 L5.6 12.5 Z" fill="#1d1d36"/></svg>
<div class="cb" style="left:307px;top:500px"></div>
<div class="cb" style="left:402px;top:500px"></div>
<div class="cb" style="left:497px;top:500px"></div>
<div class="cb" style="left:592px;top:500px"></div><svg style="left:592px;top:498px" width="14" height="14" viewBox="0 -2 14 14"><path d="M0.7 6.7 L2.1 5.6 L5.3 9.7 L12.5 -1.3 L13.7 -0.7 L5.6 12.5 Z" fill="#1d1d36"/></svg>
<span class="t" style="left:40.00px;top:522px;letter-spacing:-0.119px;">Movie Artist Line</span>
<div class="cb" style="left:212px;top:521px"></div><svg style="left:212px;top:519px" width="14" height="14" viewBox="0 -2 14 14"><path d="M0.7 6.7 L2.1 5.6 L5.3 9.7 L12.5 -1.3 L13.7 -0.7 L5.6 12.5 Z" fill="#1d1d36"/></svg>
<div class="cb" style="left:307px;top:521px"></div>
<div class="cb" style="left:402px;top:521px"></div>
<div class="cb" style="left:497px;top:521px"></div>
<div class="cb" style="left:592px;top:521px"></div><svg style="left:592px;top:519px" width="14" height="14" viewBox="0 -2 14 14"><path d="M0.7 6.7 L2.1 5.6 L5.3 9.7 L12.5 -1.3 L13.7 -0.7 L5.6 12.5 Z" fill="#1d1d36"/></svg>
<span class="t" style="left:40.00px;top:543px;letter-spacing:0.091px;">Movie Artist</span>
<div class="cb" style="left:212px;top:542px"></div><svg style="left:212px;top:540px" width="14" height="14" viewBox="0 -2 14 14"><path d="M0.7 6.7 L2.1 5.6 L5.3 9.7 L12.5 -1.3 L13.7 -0.7 L5.6 12.5 Z" fill="#1d1d36"/></svg>
<div class="cb" style="left:307px;top:542px"></div><svg style="left:307px;top:540px" width="14" height="14" viewBox="0 -2 14 14"><path d="M0.7 6.7 L2.1 5.6 L5.3 9.7 L12.5 -1.3 L13.7 -0.7 L5.6 12.5 Z" fill="#1d1d36"/></svg>
<div class="cb" style="left:402px;top:542px"></div><svg style="left:402px;top:540px" width="14" height="14" viewBox="0 -2 14 14"><path d="M0.7 6.7 L2.1 5.6 L5.3 9.7 L12.5 -1.3 L13.7 -0.7 L5.6 12.5 Z" fill="#1d1d36"/></svg>
<div class="cb" style="left:497px;top:542px"></div><svg style="left:497px;top:540px" width="14" height="14" viewBox="0 -2 14 14"><path d="M0.7 6.7 L2.1 5.6 L5.3 9.7 L12.5 -1.3 L13.7 -0.7 L5.6 12.5 Z" fill="#1d1d36"/></svg>
<div class="cb" style="left:592px;top:542px"></div><svg style="left:592px;top:540px" width="14" height="14" viewBox="0 -2 14 14"><path d="M0.7 6.7 L2.1 5.6 L5.3 9.7 L12.5 -1.3 L13.7 -0.7 L5.6 12.5 Z" fill="#1d1d36"/></svg>
<span class="t" style="left:40.50px;top:564px;letter-spacing:-0.019px;">Artist Picture</span>
<div class="cb" style="left:212px;top:563px"></div><svg style="left:212px;top:561px" width="14" height="14" viewBox="0 -2 14 14"><path d="M0.7 6.7 L2.1 5.6 L5.3 9.7 L12.5 -1.3 L13.7 -0.7 L5.6 12.5 Z" fill="#1d1d36"/></svg>
<div class="cb" style="left:307px;top:563px"></div>
<div class="cb" style="left:402px;top:563px"></div>
<div class="cb" style="left:497px;top:563px"></div>
<div class="cb" style="left:592px;top:563px"></div><svg style="left:592px;top:561px" width="14" height="14" viewBox="0 -2 14 14"><path d="M0.7 6.7 L2.1 5.6 L5.3 9.7 L12.5 -1.3 L13.7 -0.7 L5.6 12.5 Z" fill="#1d1d36"/></svg>
<span class="t" style="left:39.65px;top:585px;letter-spacing:-0.154px;">Movie Picture</span>
<div class="cb" style="left:212px;top:584px"></div><svg style="left:212px;top:582px" width="14" height="14" viewBox="0 -2 14 14"><path d="M0.7 6.7 L2.1 5.6 L5.3 9.7 L12.5 -1.3 L13.7 -0.7 L5.6 12.5 Z" fill="#1d1d36"/></svg>
<div class="cb" style="left:307px;top:584px"></div><svg style="left:307px;top:582px" width="14" height="14" viewBox="0 -2 14 14"><path d="M0.7 6.7 L2.1 5.6 L5.3 9.7 L12.5 -1.3 L13.7 -0.7 L5.6 12.5 Z" fill="#1d1d36"/></svg>
<div class="cb" style="left:402px;top:584px"></div><svg style="left:402px;top:582px" width="14" height="14" viewBox="0 -2 14 14"><path d="M0.7 6.7 L2.1 5.6 L5.3 9.7 L12.5 -1.3 L13.7 -0.7 L5.6 12.5 Z" fill="#1d1d36"/></svg>
<div class="cb" style="left:497px;top:584px"></div><svg style="left:497px;top:582px" width="14" height="14" viewBox="0 -2 14 14"><path d="M0.7 6.7 L2.1 5.6 L5.3 9.7 L12.5 -1.3 L13.7 -0.7 L5.6 12.5 Z" fill="#1d1d36"/></svg>
<div class="cb" style="left:592px;top:584px"></div><svg style="left:592px;top:582px" width="14" height="14" viewBox="0 -2 14 14"><path d="M0.7 6.7 L2.1 5.6 L5.3 9.7 L12.5 -1.3 L13.7 -0.7 L5.6 12.5 Z" fill="#1d1d36"/></svg>
</div></body></html>
